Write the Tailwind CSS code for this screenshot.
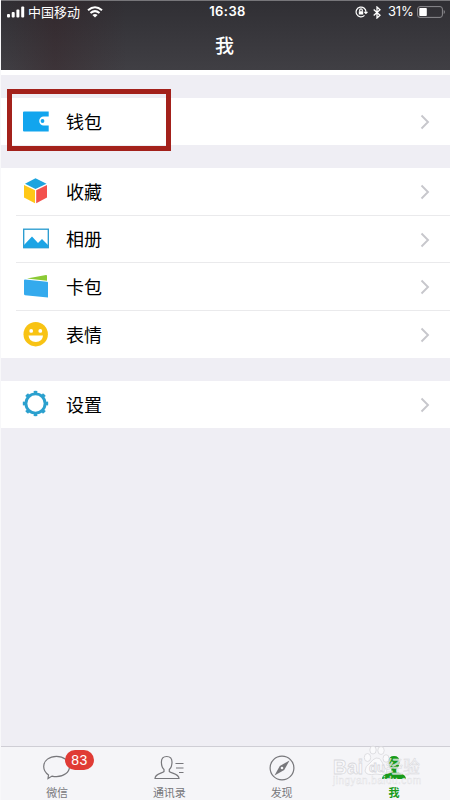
<!DOCTYPE html>
<html lang="zh-CN">
<head>
<meta charset="utf-8">
<title>我</title>
<script src="https://cdn.jsdelivr.net/npm/@tailwindcss/browser@4"></script>
</head>
<body class="w-[450px] h-[800px] overflow-hidden bg-[#efeef4] font-['Liberation_Sans','Noto_Sans_CJK_SC',sans-serif] text-black">
<div class="relative flex flex-col w-[450px] h-[800px] border-l border-[#f8f8fa]">
  <header class="h-[70px] shrink-0 bg-linear-to-b from-[#302f34] to-[#403f44] border-t border-[#77767a] text-white relative">
    <div class="absolute inset-0 bg-linear-to-r from-transparent via-[#35191d]/30 via-12% to-transparent to-28%"></div>
    <div class="relative h-[22px] grid grid-cols-[1fr_auto_1fr] items-center pl-[6px] pr-[5px]">
      <div class="flex items-center">
        <svg class="w-[18px] h-[12px] -mt-px" viewBox="0 0 18 12" fill="white"><rect x="0" y="8" width="3" height="3.500" rx="1"/><rect x="4.700" y="6" width="3" height="5.500" rx="1"/><rect x="9.400" y="3.500" width="3" height="8" rx="1"/><rect x="14.200" y="0.500" width="3" height="11" rx="1"/></svg>
        <span class="ml-[3px] text-[13px] leading-[20px] pt-px">中国移动</span>
        <svg class="ml-[7px] w-[16px] h-[12px] -mt-px" viewBox="0 0 16 12" fill="none" stroke="white" stroke-width="2"><path d="M1 4.300Q8-1.800 15 4.300M3.500 7Q8 3.200 12.500 7"/><path d="M8 11.500L5.400 8.900Q8 6.900 10.600 8.900Z" fill="white" stroke="none"/></svg>
      </div>
      <span class="text-[13px] font-semibold tracking-[0.4px] font-[Inter] pl-[3px]">16:38</span>
      <div class="flex items-center justify-end">
        <svg class="w-[13px] h-[12px]" viewBox="0 0 13 12" fill="none" stroke="white" stroke-width="1.200"><path d="M9.500 9.400A4.900 4.900 0 1 1 10.900 6.400M9.300 5.800L10.900 7.400L12.500 5.800"/><rect x="3.800" y="5.200" width="4.400" height="3.300" fill="white" stroke="none"/><path d="M4.700 5.300V4.200a1.300 1.300 0 0 1 2.600 0V5.300"/></svg>
        <svg class="ml-[5px] w-[8px] h-[13px]" viewBox="0 0 8 13" fill="none" stroke="white" stroke-width="1.300"><path d="M0.700 3.500L7 9.300L4 12V1L7 3.700L0.700 9.500"/></svg>
        <span class="ml-[7px] text-[13px] font-[Inter] w-[27px] tracking-[-0.2px]">31%</span>
        <svg class="ml-[2px] w-[28px] h-[12px]" viewBox="0 0 28 12"><rect x="0.600" y="0.600" width="24.800" height="10.800" rx="2.400" fill="none" stroke="#8c8b8f"/><rect x="2.300" y="2" width="7.500" height="8" rx="0.800" fill="white"/><path d="M26.700 4v4q1.200-.5 1.200-2t-1.200-2" fill="#8c8b8f"/></svg>
      </div>
    </div>
    <h1 class="relative text-center text-[19px] leading-[48px] font-medium pr-[2px]">我</h1>
  </header>
  <main class="grow">
    <div class="h-[5px] bg-white"></div>
    <section class="mt-[23px] bg-white h-[47px] flex items-center pl-[21px] pr-[20px] relative">
      <svg class="w-[28px] h-[28px] -mt-[2px]" viewBox="0 0 28 28"><path d="M2 4.500H26.700V9.500H21.700a4.500 4.500 0 0 0 0 9H26.700V24.500H2a1 1 0 0 1-1-1V5.500a1 1 0 0 1 1-1Z" fill="#12a5ee"/><circle cx="20.500" cy="14" r="1.900" fill="#12a5ee"/></svg>
      <span class="ml-[16px] text-[18px] pt-[3px]">钱包</span>
      <svg class="ml-auto w-[10px] h-[16px]" viewBox="0 0 10 16" fill="none" stroke="#c7c7cc" stroke-width="1.900"><path d="M1.500 1.500L8 8L1.500 14.500"/></svg>
      <div class="absolute left-[6px] top-[-9px] w-[164px] h-[62px] border-5 border-[#a3211b]"></div>
    </section>
    <section class="mt-[23px] bg-white h-[190px] grid grid-rows-4">
      <div class="flex items-center pl-[21px] pr-[20px]">
        <svg class="w-[28px] h-[28px] -mt-[2px]" viewBox="0 0 28 28"><path d="M13.500 1.300L24.500 6.800L13.500 12L3 6.800Z" fill="#1ca4df"/><path d="M2 8L13 13.300V26.300L2 20.500Z" fill="#ffc817"/><path d="M14.200 13.300L25 8V20.500L14.200 26.300Z" fill="#f3514d"/></svg>
        <span class="ml-[16px] text-[18px] pt-[3px]">收藏</span>
        <svg class="ml-auto w-[10px] h-[16px]" viewBox="0 0 10 16" fill="none" stroke="#c7c7cc" stroke-width="1.900"><path d="M1.500 1.500L8 8L1.500 14.500"/></svg>
      </div>
      <div class="flex items-center ml-[15px] pl-[6px] pr-[20px] -mt-px border-t border-[#eaeaec]">
        <svg class="w-[28px] h-[28px]" viewBox="0 0 28 28"><rect x="1.700" y="4.200" width="24.600" height="18.500" fill="white" stroke="#2499ce" stroke-width="1.300"/><path d="M2 20L10 11.500L16 18L20 14L26 20V22.500H2Z" fill="#1ba4e5"/></svg>
        <span class="ml-[16px] text-[18px] pt-[3px]">相册</span>
        <svg class="ml-auto w-[10px] h-[16px] mt-px" viewBox="0 0 10 16" fill="none" stroke="#c7c7cc" stroke-width="1.900"><path d="M1.500 1.500L8 8L1.500 14.500"/></svg>
      </div>
      <div class="flex items-center ml-[15px] pl-[6px] pr-[20px] -mt-px border-t border-[#eaeaec]">
        <svg class="w-[28px] h-[28px]" viewBox="0 0 28 28"><path d="M5 5.500L24 2Q25 1.900 25 3V7.700Z" fill="#8bca35"/><path d="M3 6.500L25 8.700Q26 8.800 26 9.700V24.500L3 22.200Q2 22.100 2 21.100V7.300Q2 6.500 3 6.500Z" fill="#34aaed"/></svg>
        <span class="ml-[16px] text-[18px] pt-[4px]">卡包</span>
        <svg class="ml-auto w-[10px] h-[16px]" viewBox="0 0 10 16" fill="none" stroke="#c7c7cc" stroke-width="1.900"><path d="M1.500 1.500L8 8L1.500 14.500"/></svg>
      </div>
      <div class="flex items-center ml-[15px] pl-[6px] pr-[20px] -mt-px border-t border-[#eaeaec]">
        <svg class="w-[28px] h-[28px]" viewBox="0 0 28 28"><circle cx="13.700" cy="14.200" r="12.200" fill="#f8c314"/><circle cx="9.200" cy="10.900" r="1.900" fill="white"/><circle cx="18.300" cy="10.900" r="1.900" fill="white"/><path d="M6.500 15.400H21Q20.500 21.900 13.800 21.900T6.500 15.400Z" fill="white"/></svg>
        <span class="ml-[16px] text-[18px] pt-[4px]">表情</span>
        <svg class="ml-auto w-[10px] h-[16px] mt-px" viewBox="0 0 10 16" fill="none" stroke="#c7c7cc" stroke-width="1.900"><path d="M1.500 1.500L8 8L1.500 14.500"/></svg>
      </div>
    </section>
    <section class="mt-[23px] bg-white h-[47px] flex items-center pl-[21px] pr-[20px]">
      <svg class="w-[28px] h-[28px] -mt-px" viewBox="0 0 28 28" fill="none" stroke="#2ba0ce"><circle cx="13.500" cy="13.500" r="9.600" stroke-width="2.900"/><circle cx="13.500" cy="13.500" r="11.400" stroke-width="2.600" pathLength="80" stroke-dasharray="4 6" stroke-dashoffset="2"/></svg>
      <span class="ml-[16px] text-[18px] pt-[3px]">设置</span>
      <svg class="ml-auto w-[10px] h-[16px]" viewBox="0 0 10 16" fill="none" stroke="#c7c7cc" stroke-width="1.900"><path d="M1.500 1.500L8 8L1.500 14.500"/></svg>
    </section>
  </main>
  <nav class="h-[54px] shrink-0 bg-[#f5f5f8] border-t border-[#cfced5] grid grid-cols-4 text-[11px] leading-[14px] text-[#77777b] relative">
    <div class="flex flex-col items-center pt-[7px] relative">
      <svg class="w-[30px] h-[28px]" viewBox="0 0 30 28" fill="none" stroke="#77777b" stroke-width="1.200"><path d="M6.500 21Q1.700 17.500 1.700 12.500C1.700 6.500 7.500 2.300 14.500 2.300S27.500 6.500 27.500 12.500S21.500 22.700 14.500 22.700Q12 22.700 10 22.100L6 24.500Z"/></svg>
      <span class="mt-[4px]">微信</span>
      <span class="absolute left-[64px] top-[3px] w-[29px] h-[20px] rounded-full bg-[#e03b35] text-white text-[14px] leading-[20px] tracking-[0.5px] text-center">83</span>
    </div>
    <div class="flex flex-col items-center pt-[7px]">
      <svg class="w-[30px] h-[28px]" viewBox="0 0 30 28" fill="none" stroke="#77777b" stroke-width="1.200"><path d="M10 15.500C7.700 13.500 7.400 11 7.400 8Q7.400 2.500 12.700 2.500T18 8C18 11 17.500 13.500 15.300 15.500V17.500C17 19.500 25 19.500 25 24.500H1C1 19.500 8.300 19.500 10 17.500ZM21.500 9.500H29.500M22 14H29.500M25 18.500H29.500"/></svg>
      <span class="mt-[4px]">通讯录</span>
    </div>
    <div class="flex flex-col items-center pt-[7px]">
      <svg class="w-[30px] h-[28px]" viewBox="0 0 30 28" fill="none" stroke="#77777b" stroke-width="1.200"><circle cx="15" cy="14" r="11.900"/><path d="M22.500 6.500L17.200 16L7.500 21.500L12.800 12Z" fill="#77777b" stroke="none"/><circle cx="15" cy="14" r="1.300" fill="#f5f5f8" stroke="none"/></svg>
      <span class="mt-[4px]">发现</span>
    </div>
    <div class="flex flex-col items-center pt-[7px] text-[#179b19] font-bold">
      <svg class="w-[30px] h-[28px]" viewBox="0 0 30 28" fill="#179b19"><path d="M12.500 15.500C9.700 13 9.500 10 9.500 7.500Q9.500 2 15 2T20.500 7.500C20.500 10 20.200 13 17.500 15.500V17.500C19.500 19.500 27 19.500 27 25H3C3 19.500 10.500 19.500 12.500 17.500Z"/></svg>
      <span class="mt-[4px]">我</span>
    </div>
    <div class="absolute left-[332px] top-0 w-[94px] h-[40px]">
      <svg class="w-[94px] h-[40px] overflow-visible" viewBox="0 0 94 40" fill="#fcfcfd" fill-opacity="0.7" stroke="#d8d8dc" stroke-width="0.800" font-family="Liberation Sans, Noto Sans CJK SC, sans-serif"><ellipse cx="34.500" cy="10.500" rx="3.200" ry="4"/><ellipse cx="40" cy="3" rx="3.200" ry="4"/><ellipse cx="48" cy="3.500" rx="3.200" ry="4"/><ellipse cx="53" cy="11.500" rx="3" ry="3.800"/><path d="M43 11Q47 10 49 15T54 24Q53 29 43 27Q33 29 32 24Q32 19 37 16Q40 12 43 11Z"/><text x="0" y="27" font-size="21" font-weight="bold" textLength="30" lengthAdjust="spacingAndGlyphs">Bai</text><text x="36" y="25" font-size="13" font-weight="bold">du</text><text x="53" y="26" font-size="17" stroke-width="0.500" textLength="34" lengthAdjust="spacingAndGlyphs">经验</text><text x="0" y="37" font-size="10" stroke-width="0.400" stroke-opacity="0.800" textLength="88">jingyan.baidu.com</text></svg>
    </div>
  </nav>
</div>
</body>
</html>
